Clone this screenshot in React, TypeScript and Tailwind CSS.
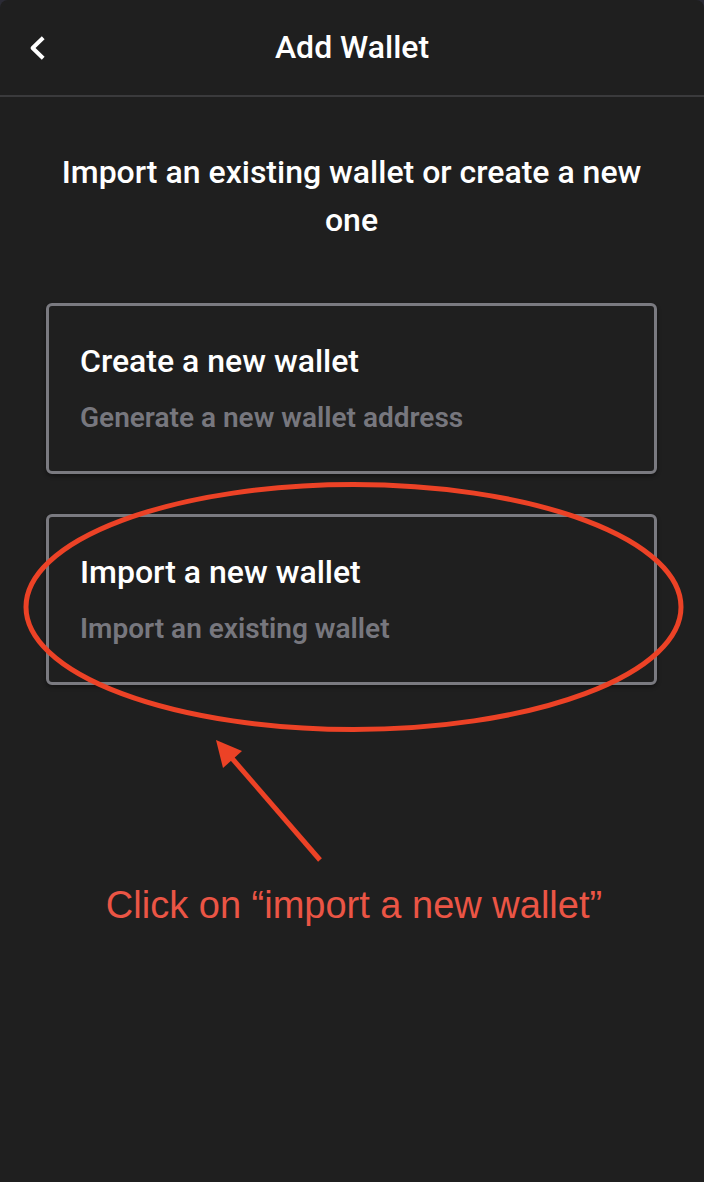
export default function App() {
  return (
    <div className="bg-[#2b2b35]">
      <main className="flex min-h-screen flex-col rounded-t-lg bg-[#1f1f1f] font-['Roboto',sans-serif] text-white">
        <header className="grid h-[97px] grid-cols-[72px_1fr_72px] items-center border-b-2 border-[#3a3a3c]">
          <button type="button" aria-label="Back" className="flex h-12 items-center pl-7">
            <svg viewBox="0 0 18 26" className="h-[26px] w-[18px]" fill="none" stroke="currentColor" strokeWidth="4">
              <path d="M15.2 2.8 4.6 13 15.2 23.2" strokeLinejoin="round" />
            </svg>
          </button>
          <h1 className="pb-0.5 text-center text-[32px] leading-10 font-medium">Add Wallet</h1>
        </header>
        <section className="flex flex-col pt-[51px] pr-[47px] pl-[46px]">
          <p className="mb-[59px] text-center text-[32px] leading-12 font-medium">
            Import an existing wallet or create a new one
          </p>
          <div className="relative flex flex-col gap-10">
            <Choice title="Create a new wallet" detail="Generate a new wallet address" />
            <Choice title="Import a new wallet" detail="Import an existing wallet" />
            <svg
              viewBox="0 0 704 400"
              className="pointer-events-none absolute top-[177px] -left-[46px] w-[704px] max-w-none"
              aria-hidden="true"
            >
              <ellipse cx="353.5" cy="127" rx="327.5" ry="122.5" fill="none" stroke="#ec4226" strokeWidth="5" />
              <path d="M320 380 230 276" stroke="#ec4226" strokeWidth="5" />
              <path d="M216 260 242 271 223 288Z" fill="#ec4226" />
            </svg>
          </div>
        </section>
        <p className="mt-[196px] pl-1 text-center font-['Liberation_Sans',sans-serif] text-[38px] leading-12 text-[#eb5545]">
          Click on “import a new wallet”
        </p>
      </main>
    </div>
  );
}

function Choice({ title, detail }: { title: string; detail: string }) {
  return (
    <button
      type="button"
      className="flex h-[171px] flex-col justify-center gap-[17px] rounded-md border-[3px] border-[#7a7a80] px-[31px] pt-px text-left shadow-[0_2px_4px_rgba(0,0,0,0.4)]"
    >
      <span className="text-[32px] leading-10 font-medium">{title}</span>
      <span className="text-[28px] leading-10 font-semibold text-[#77777e]">{detail}</span>
    </button>
  );
}
